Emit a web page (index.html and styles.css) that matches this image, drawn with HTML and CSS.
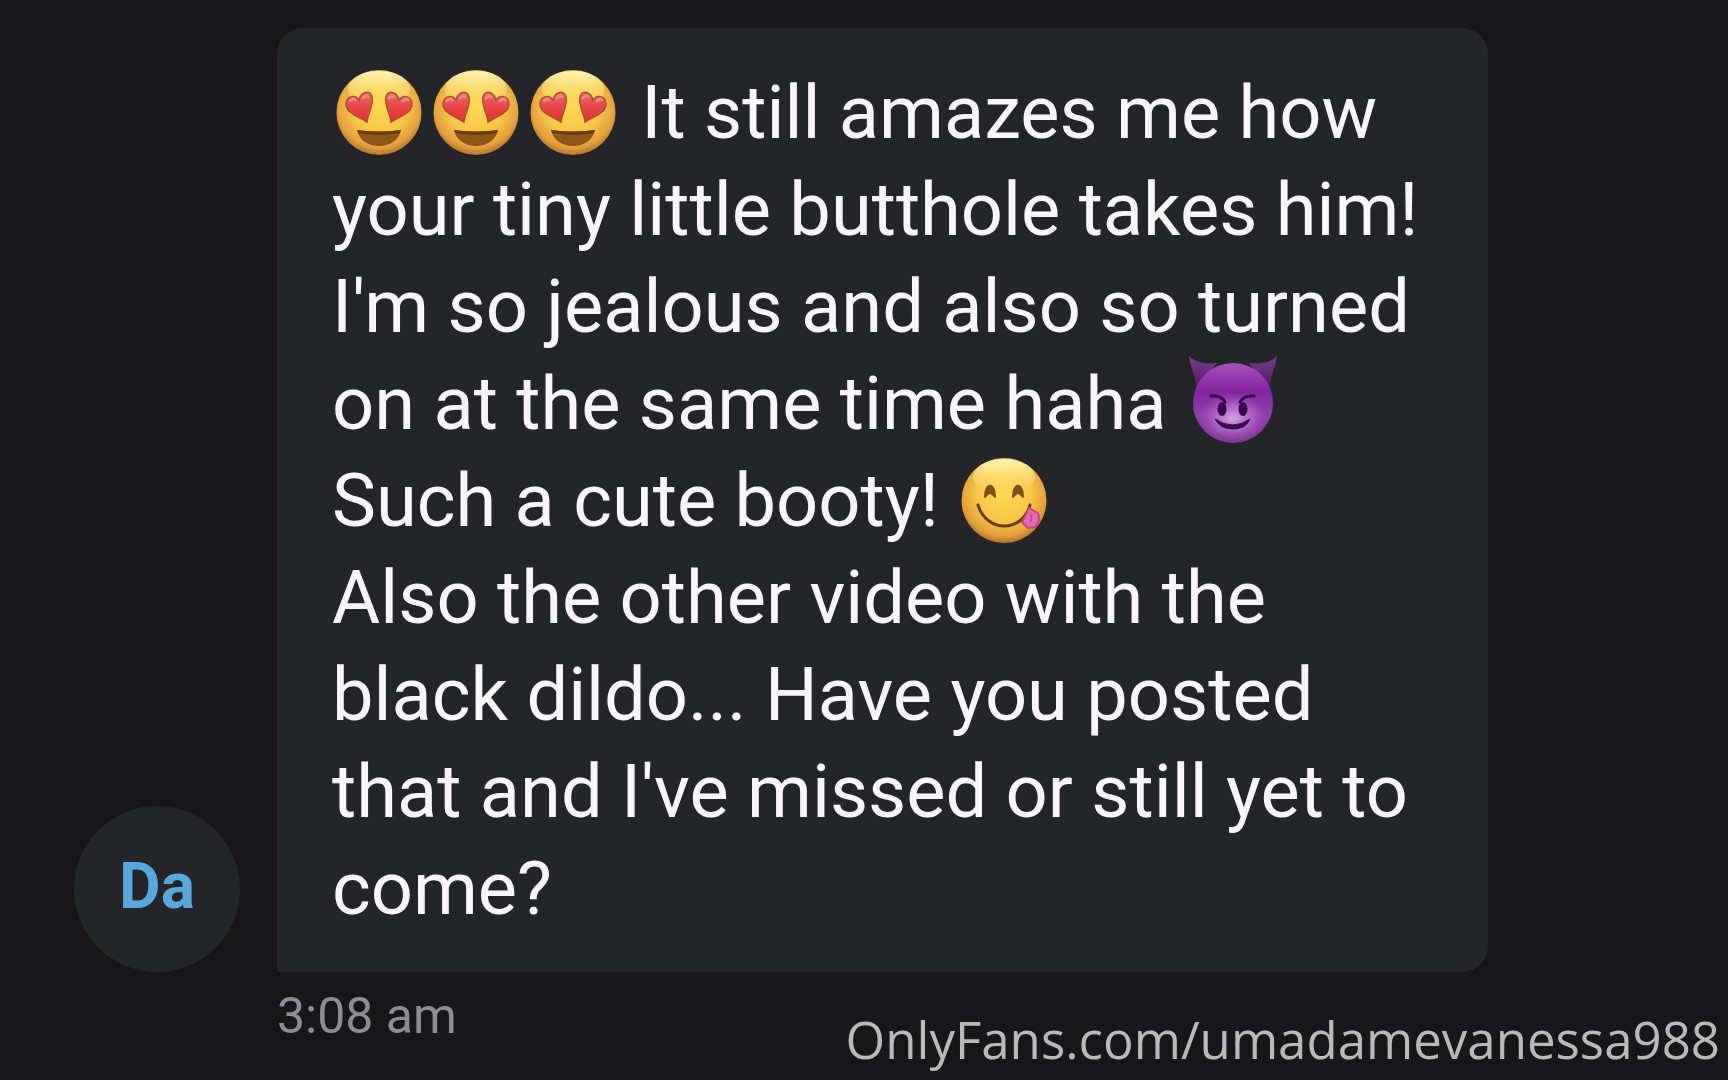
FILE: index.html
```
<!DOCTYPE html>
<html lang="en">
<head>
<meta charset="utf-8">
<meta name="viewport" content="width=device-width, initial-scale=1">
<title>Chat message</title>
<link rel="stylesheet" href="styles.css">
</head>
<body>
<svg class="defs" width="0" height="0" aria-hidden="true">
  <defs>
    <radialGradient id="face" cx=".5" cy=".42" r=".6">
      <stop offset="0" stop-color="#fbd950"/><stop offset=".55" stop-color="#f6c648"/><stop offset=".82" stop-color="#e5a03c"/><stop offset="1" stop-color="#a86a26"/>
    </radialGradient>
    <linearGradient id="shine" x1="0" y1="0" x2="0" y2="1">
      <stop offset="0" stop-color="#fffbc0" stop-opacity=".9"/><stop offset="1" stop-color="#ffe56c" stop-opacity="0"/>
    </linearGradient>
    <linearGradient id="heart-fill" x1="0" y1="0" x2="0" y2="1">
      <stop offset="0" stop-color="#ee6a70"/><stop offset=".5" stop-color="#e84448"/><stop offset="1" stop-color="#dd3030"/>
    </linearGradient>
    <linearGradient id="devil-fill" x1="0" y1="0" x2="0" y2="1">
      <stop offset="0" stop-color="#a552bd"/><stop offset=".35" stop-color="#83249f"/><stop offset=".65" stop-color="#9040a9"/><stop offset="1" stop-color="#7f3399"/>
    </linearGradient>
    <radialGradient id="devil-glow" cx=".5" cy=".5" r=".5">
      <stop offset="0" stop-color="#dba6e6" stop-opacity=".95"/><stop offset=".5" stop-color="#c583d4" stop-opacity=".6"/><stop offset="1" stop-color="#b060c4" stop-opacity="0"/>
    </radialGradient>
    <linearGradient id="horn" x1="0" y1="0" x2="0" y2="1">
      <stop offset="0" stop-color="#74408a"/><stop offset="1" stop-color="#561569"/>
    </linearGradient>
    <symbol id="base" viewBox="0 0 97 97">
      <circle cx="47" cy="48.500" r="42.500" fill="url(#face)"/>
      <ellipse cx="47" cy="25" rx="31" ry="18" fill="url(#shine)"/>
    </symbol>
    <symbol id="heart-eyes" viewBox="0 0 97 97">
      <use href="#base"/>
      <path id="heart" d="M35 58 C27 53 13 49 14 39 C15 32 23 30 27 36 C29 28 38 25 40 33 C42 41 36 49 35 58Z" fill="url(#heart-fill)" stroke="#a7562c" stroke-width="1.500"/>
      <use href="#heart" transform="translate(94 0) scale(-1 1)"/>
      <path d="M18 37q3-3 5-1M31 34q3-3 5-1M57 34q3-3 5-1M71 37q3-3 5-1" fill="none" stroke="#f39a9c" stroke-opacity=".7" stroke-width="3" stroke-linecap="round"/>
      <path d="M25 66 Q47 69 69 66 C67 76 58 82 47 82 C36 82 27 76 25 66Z" fill="#8d5719"/>
      <path d="M25 66 Q47 69 69 66 L68 69 Q47 73 26 69Z" fill="#6b3d0c"/>
    </symbol>
    <symbol id="devil" viewBox="0 0 97 97">
      <path d="M4 1 C11 8 20 9 32 8 L11 34 C11 20 5 12 4 1Z M92 1 C85 8 76 9 64 8 L85 34 C85 20 91 12 92 1Z" fill="url(#horn)"/>
      <circle cx="48" cy="48" r="40" fill="url(#devil-fill)"/>
      <ellipse cx="48" cy="63" rx="34" ry="25" fill="url(#devil-glow)"/>
      <path d="M26 41q10-1 14 6M69 41q-10-1-14 6" fill="none" stroke="#35064d" stroke-width="3" stroke-linecap="round"/>
      <ellipse cx="37" cy="54" rx="4.500" ry="7" fill="#35064d"/><ellipse cx="58" cy="54" rx="4.500" ry="7" fill="#35064d"/>
      <path d="M30 64 Q48 76 65 64 Q61 74 48 74 Q35 74 30 64Z" fill="#35064d" stroke="#35064d" stroke-linejoin="round"/>
    </symbol>
    <symbol id="yum" viewBox="0 0 97 97">
      <use href="#base"/>
      <path d="M28 45 C28 30 38 30 38 45 Q33 37 28 45ZM56 45 C56 30 66 30 66 45 Q61 37 56 45Z" fill="#7a5117" stroke="#7a5117" stroke-width="2" stroke-linejoin="round"/>
      <path d="M21 53 C30 82 66 80 73 53" fill="none" stroke="#6a3e0c" stroke-width="3" stroke-linecap="round"/>
      <path d="M72 56 L81 61 Q84 70 78 75 L71 76 L65 70 Q69 64 72 56Z" fill="#e46bb3" stroke="#cc4488" stroke-width="2" stroke-linejoin="round"/>
      <path d="M74 62q1 5-1 8" fill="none" stroke="#c94b99" stroke-width="2"/>
    </symbol>
  </defs>
</svg>
<main class="chat">
  <div class="avatar">Da</div>
  <p class="bubble"><svg class="emoji" role="img" aria-label="Heart eyes"><use href="#heart-eyes"/></svg><svg class="emoji" role="img" aria-label="Heart eyes"><use href="#heart-eyes"/></svg><svg class="emoji" role="img" aria-label="Heart eyes"><use href="#heart-eyes"/></svg> It still amazes me how<br>
    your tiny little butthole takes him!<br>
    I'm so jealous and also so turned<br>
    on at the same time haha <svg class="emoji" role="img" aria-label="Smiling devil"><use href="#devil"/></svg><br>
    Such a cute booty! <svg class="emoji" role="img" aria-label="Yum"><use href="#yum"/></svg><br>
    Also the other video with the<br>
    black dildo... Have you posted<br>
    that and I've missed or still yet to<br>
    come?</p>
  <time class="time" datetime="03:08">3:08 am</time>
</main>
<div class="watermark">OnlyFans.com/umadamevanessa988</div>
</body>
</html>
```
FILE: styles.css
```
* { box-sizing: border-box; }
body {
  margin: 0;
  min-height: 100vh;
  background: #171719;
  font-family: Roboto, sans-serif;
}
.defs { position: absolute; }
.chat {
  display: grid;
  grid-template-columns: 166px 1fr;
  column-gap: 37px;
  row-gap: 14px;
  padding: 28px 240px 0 74px;
}
.avatar {
  align-self: end;
  display: flex;
  align-items: center;
  justify-content: center;
  height: 166px;
  border-radius: 50%;
  background: #242529;
  color: #57a9dc;
  font-size: 64px;
  font-weight: 700;
  padding-bottom: 6px;
}
.bubble {
  margin: 0;
  padding: 36px 0 35px 55px;
  border-radius: 26px 26px 26px 0;
  background: #242529;
  color: #f7f7fb;
  font-size: 74px;
  line-height: 97px;
  white-space: nowrap;
}
.emoji {
  width: 97px;
  height: 97px;
  vertical-align: top;
}
.time {
  grid-column: 2;
  color: #8a8e98;
  font-size: 50px;
  line-height: 60px;
}
.watermark {
  position: absolute;
  right: 8px;
  bottom: 6px;
  color: #b9b9ba;
  font-family: "Open Sans", sans-serif;
  font-size: 51px;
  line-height: 70px;
}
```
